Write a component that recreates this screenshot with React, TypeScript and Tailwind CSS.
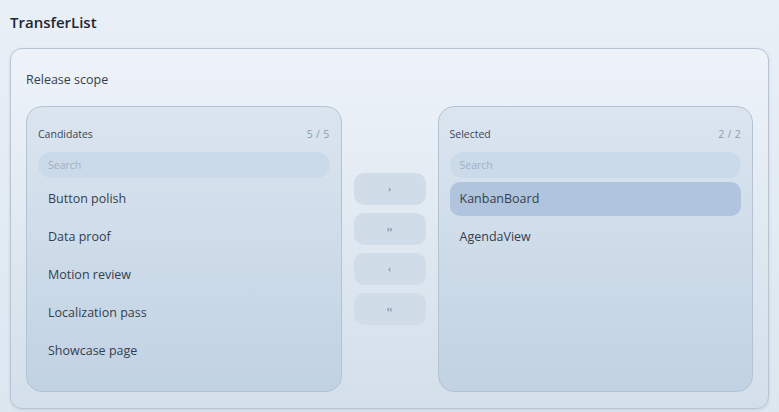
import { useState } from "react";

const font = { fontFamily: '"Segoe UI", "Open Sans", "Noto Sans", sans-serif' };

type Panel = {
  title: string;
  items: string[];
  active?: string;
};

const ListPanel = ({ title, items, active }: Panel) => {
  const [query, setQuery] = useState("");
  const shown = items.filter((i) =>
    i.toLowerCase().includes(query.toLowerCase())
  );
  return (
    <div className="flex flex-col w-[316px] h-[286px] rounded-[16px] border border-[#b4c3d4] bg-gradient-to-b from-[#dbe5ef] to-[#c1d2e3] px-[11px] pt-[19px]">
      <div className="flex items-center justify-between h-[18px] text-[10.5px] text-[#3b4656]">
        <span>{title}</span>
        <span className="text-[#8d9cad] tracking-wide">
          {shown.length} / {items.length}
        </span>
      </div>
      <input
        value={query}
        onChange={(e) => setQuery(e.target.value)}
        placeholder="Search"
        className="mt-[8px] h-[26px] w-full rounded-full bg-[#c8d8e7]/80 px-[10px] text-[10.5px] text-[#3b4656] placeholder:text-[#9fb0c2] outline-none"
      />
      <ul className="mt-1 flex flex-col gap-1">
        {shown.map((item) => (
          <li
            key={item}
            className={`flex items-center h-[34px] rounded-[10px] px-[10px] text-[12.5px] text-[#34404f] ${
              item === active ? "bg-[#b0c5dd]" : ""
            }`}
          >
            {item}
          </li>
        ))}
      </ul>
    </div>
  );
};

const App = () => {
  return (
    <div
      style={font}
      className="w-[779px] h-[412px] overflow-hidden bg-gradient-to-b from-[#e9eff6] to-[#dde7f0] px-[10px] pt-[10px]"
    >
      <h1 className="text-[15px] font-semibold text-[#1e2733] leading-[24px]">
        TransferList
      </h1>
      <div className="mt-[14px] rounded-[12px] border border-[#b6c4d4] bg-gradient-to-b from-[#eef3f9] to-[#d3dfea] px-[15px] pt-[21px] pb-4 shadow-[0_1px_3px_rgba(100,120,150,0.2)]">
        <div className="text-[12.5px] text-[#34404f] leading-[20px]">
          Release scope
        </div>
        <div className="mt-[16px] flex gap-3">
          <ListPanel
            title="Candidates"
            items={[
              "Button polish",
              "Data proof",
              "Motion review",
              "Localization pass",
              "Showcase page",
            ]}
          />
          <div className="flex w-[72px] flex-col justify-center gap-2">
            {["›", "››", "‹", "‹‹"].map((b) => (
              <button
                key={b}
                className="h-[32px] w-[72px] rounded-[10px] bg-[#d0dde9] text-[9px] text-[#5d6b7c]"
              >
                {b}
              </button>
            ))}
          </div>
          <ListPanel
            title="Selected"
            items={["KanbanBoard", "AgendaView"]}
            active="KanbanBoard"
          />
        </div>
      </div>
    </div>
  );
};

export default App;
